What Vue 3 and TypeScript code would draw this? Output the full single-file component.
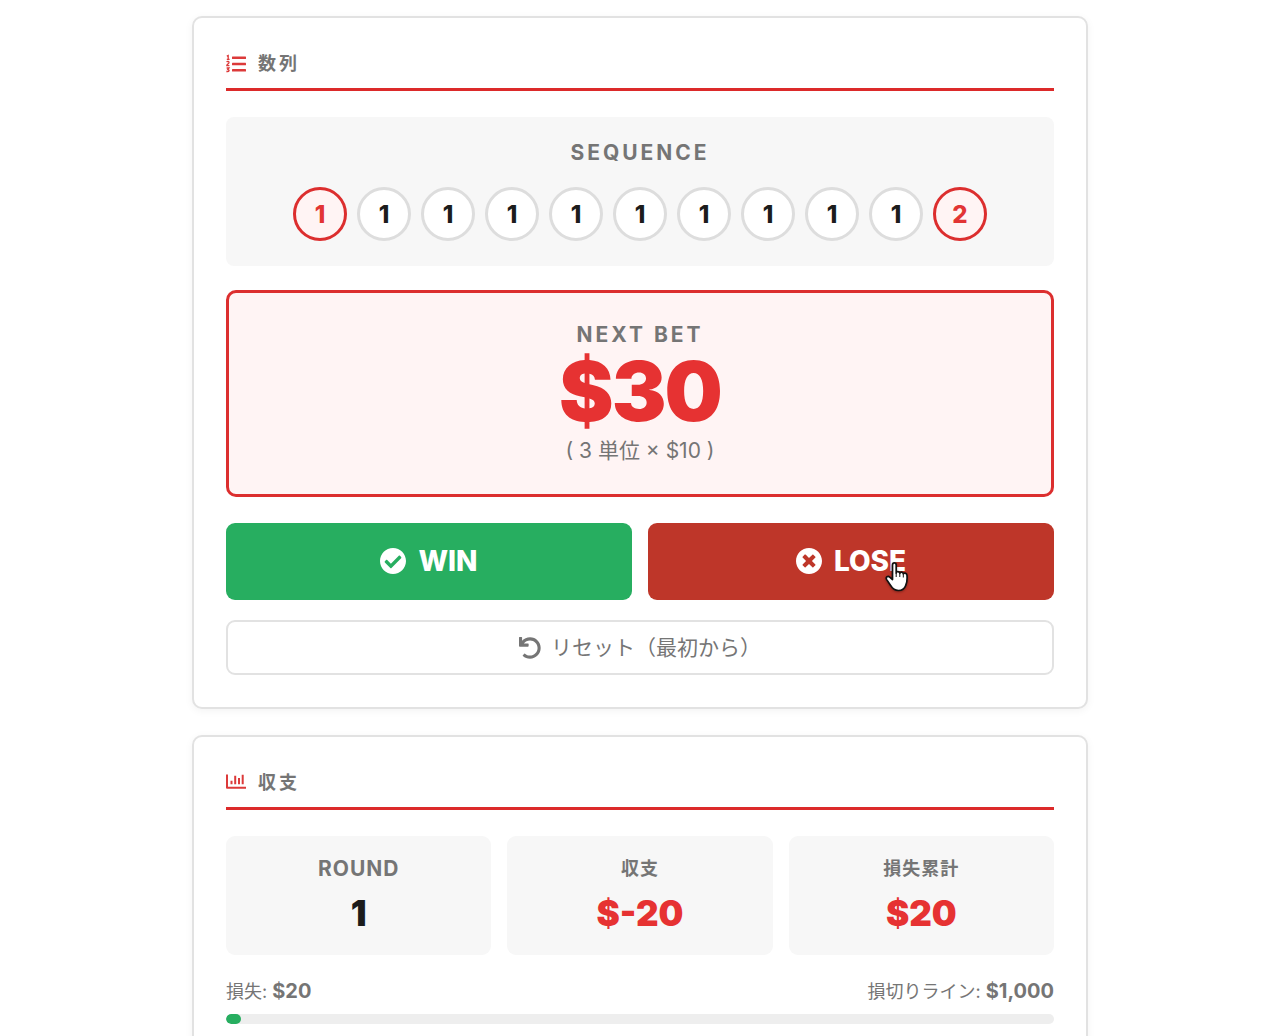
<script setup lang="ts">
interface Stat {
  label: string
  value: string
  latin?: boolean
  loss?: boolean
}

const sequence: number[] = [1, 1, 1, 1, 1, 1, 1, 1, 1, 1, 2]
const isEdge = (index: number): boolean => index === 0 || index === sequence.length - 1

const stats: Stat[] = [
  { label: 'ROUND', value: '1', latin: true },
  { label: '収支', value: '$-20', loss: true },
  { label: '損失累計', value: '$20', loss: true },
]

const lossPercent = 1.8
</script>

<template>
  <main class="page">
    <section class="card">
      <h2 class="card-title">
        <svg class="title-icon" viewBox="0 0 20 20" aria-hidden="true">
          <g fill="currentColor">
            <rect x="6" y="2.600" width="14" height="2.400" rx="0.5" />
            <rect x="6" y="8.800" width="14" height="2.400" rx="0.5" />
            <rect x="6" y="15" width="14" height="2.400" rx="0.5" />
          </g>
          <g fill="none" stroke="currentColor" stroke-width="1.3">
            <path d="M.8 2.200 2.200 1.600V5.400M.8 5.400h2.800" />
            <path d="M.6 8c1-1 2.600-.6 2.400.6C2.900 9.600.8 10.600.8 11.600h2.600" />
            <path d="M.6 14h2.400l-1.200 1.600c2 0 1.800 2.500-1.400 1.900" />
          </g>
        </svg>
        数列
      </h2>

      <div class="sequence">
        <h3 class="eyebrow">SEQUENCE</h3>
        <ol class="chips">
          <li v-for="(n, i) in sequence" :key="i" class="chip" :class="{ edge: isEdge(i) }">{{ n }}</li>
        </ol>
      </div>

      <div class="bet">
        <h3 class="eyebrow">NEXT BET</h3>
        <p class="bet-amount">$30</p>
        <p class="bet-detail">( 3 単位 × $10 )</p>
      </div>

      <div class="actions">
        <button type="button" class="action win">
          <svg class="action-icon" viewBox="8 8 496 496" aria-hidden="true">
            <path fill="currentColor" d="M504 256c0 136.967-111.033 248-248 248S8 392.967 8 256 119.033 8 256 8s248 111.033 248 248zM227.314 387.314l184-184c6.248-6.248 6.248-16.379 0-22.627l-22.627-22.627c-6.248-6.249-16.379-6.249-22.628 0L216 308.118l-70.059-70.059c-6.248-6.248-16.379-6.248-22.628 0l-22.627 22.627c-6.248 6.248-6.248 16.379 0 22.627l104 104c6.249 6.249 16.379 6.249 22.628.001z" />
          </svg>
          WIN
        </button>
        <button type="button" class="action lose">
          <svg class="action-icon" viewBox="8 8 496 496" aria-hidden="true">
            <path fill="currentColor" d="M256 8C119 8 8 119 8 256s111 248 248 248 248-111 248-248S393 8 256 8zm121.600 313.100c4.700 4.700 4.700 12.300 0 17L338 377.600c-4.700 4.700-12.300 4.700-17 0L256 312l-65.100 65.600c-4.700 4.700-12.300 4.700-17 0L134.400 338c-4.700-4.700-4.700-12.300 0-17l65.600-65-65.600-65.100c-4.700-4.700-4.700-12.300 0-17l39.600-39.600c4.700-4.700 12.300-4.700 17 0l65 65.700 65.100-65.600c4.700-4.700 12.300-4.700 17 0l39.600 39.600c4.700 4.700 4.700 12.300 0 17L312 256l65.600 65.100z" />
          </svg>
          LOSE
          <svg class="pointer" viewBox="0 0 24 32" aria-hidden="true">
            <path
              fill="#fff"
              stroke="#111"
              stroke-width="1.700"
              stroke-linejoin="round"
              d="M7.500 18.500V4.200c0-3 3.700-3 3.700 0V12c0-2 3.400-2 3.600.3.300-1.700 3.200-1.600 3.500.7.400-1.500 3.500-1.300 3.700 1.200.3 3.800.2 7.300-1.300 10.300-1.300 3.500-4 5-7.200 5-4 0-6-1.800-7.700-4.800L1.700 18.600c-1.500-2.600 1.300-4.300 3-2.500z"
            />
            <path fill="none" stroke="#111" stroke-width="1" d="M11.200 12v4M14.800 12.500V16M18.300 13.200V16.500" />
          </svg>
        </button>
      </div>

      <button type="button" class="reset">
        <svg class="reset-icon" viewBox="0 0 512 512" aria-hidden="true">
          <path fill="currentColor" d="M212.333 224.333H12c-6.627 0-12-5.373-12-12V12C0 5.373 5.373 0 12 0h48c6.627 0 12 5.373 12 12v78.112C117.773 39.279 184.260 7.470 258.175 8.007c136.906.994 246.448 111.623 246.157 248.532C504.041 393.258 393.120 504 256.333 504c-64.089 0-122.496-24.313-166.510-64.215-5.099-4.622-5.334-12.554-.467-17.420l33.967-33.967c4.474-4.474 11.662-4.717 16.401-.525C170.760 415.336 211.580 432 256.333 432c97.268 0 176-78.716 176-176 0-97.267-78.716-176-176-176-58.496 0-110.280 28.476-142.274 72.333h98.274c6.627 0 12 5.373 12 12v48c0 6.627-5.373 12-12 12z" />
        </svg>
        リセット（最初から）
      </button>
    </section>

    <section class="card">
      <h2 class="card-title">
        <svg class="title-icon" viewBox="0 0 20 20" aria-hidden="true">
          <g fill="none" stroke="currentColor" stroke-width="2">
            <path d="M1 1.500v13.200h19" stroke-linejoin="round" />
            <path d="M5.500 7.700v3.600M9.200 2.700v8.600M13 5v6.300M16.700 1.800v9.500" />
          </g>
        </svg>
        収支
      </h2>

      <dl class="stats">
        <div v-for="stat in stats" :key="stat.label" class="stat">
          <dt class="stat-label" :class="{ latin: stat.latin }">{{ stat.label }}</dt>
          <dd class="stat-value" :class="{ loss: stat.loss }">{{ stat.value }}</dd>
        </div>
      </dl>

      <div class="meter-labels">
        <span>損失: <strong>$20</strong></span>
        <span>損切りライン: <strong>$1,000</strong></span>
      </div>
      <div class="meter" role="progressbar" aria-label="損失" aria-valuemin="0" aria-valuemax="1000" aria-valuenow="20">
        <div class="meter-fill" :style="{ width: lossPercent + '%' }"></div>
      </div>
    </section>
  </main>
</template>

<style>
body {
  margin: 0;
  background: #fff;
}
</style>

<style scoped>
.page {
  box-sizing: border-box;
  max-width: 928px;
  margin: 0 auto;
  padding: 16px;
  display: flex;
  flex-direction: column;
  gap: 26px;
  font-family: Inter, "Noto Sans CJK JP", sans-serif;
  color: #757575;
}
.page * {
  box-sizing: border-box;
}
h2,
h3,
p,
ol,
dl,
dd {
  margin: 0;
  padding: 0;
}
.card {
  padding: 32px;
  border: 2px solid #e2e2e2;
  border-radius: 10px;
  background: #fff;
  box-shadow: 0 2px 8px rgba(0, 0, 0, 0.05);
}
.card-title {
  display: flex;
  align-items: center;
  gap: 12px;
  margin-bottom: 26px;
  padding-bottom: 10px;
  border-bottom: 3px solid #dc2a2a;
  font-size: 18px;
  line-height: 28px;
  font-weight: 700;
  letter-spacing: 3px;
}
.title-icon {
  width: 20px;
  height: 20px;
  color: #dc3a3a;
}
.sequence {
  margin-bottom: 24px;
  padding: 24px 16px 25px;
  border-radius: 8px;
  background: #f7f7f7;
  text-align: center;
}
.eyebrow {
  font-size: 21px;
  line-height: 24px;
  font-weight: 700;
  letter-spacing: 3px;
}
.chips {
  display: flex;
  flex-wrap: wrap;
  justify-content: center;
  gap: 10px;
  margin-top: 22px;
  list-style: none;
}
.chip {
  display: flex;
  align-items: center;
  justify-content: center;
  width: 54px;
  height: 54px;
  border: 3px solid #ddd;
  border-radius: 50%;
  background: #fff;
  color: #1c1c1c;
  font-size: 24px;
  font-weight: 800;
}
.chip.edge {
  border-color: #dc2e2e;
  background: #fff4f4;
  color: #e23434;
}
.bet {
  margin-bottom: 26px;
  padding: 30px 16px 29px;
  border: 3px solid #dc2e2e;
  border-radius: 10px;
  background: #fff4f4;
  text-align: center;
}
.bet-amount {
  color: #e63232;
  font-size: 82px;
  line-height: 90px;
  font-weight: 900;
  letter-spacing: -2px;
}
.bet-detail {
  font-size: 21px;
  line-height: 28px;
}
.actions {
  display: grid;
  grid-template-columns: 1fr 1fr;
  gap: 16px;
  margin-bottom: 20px;
}
.action {
  position: relative;
  display: flex;
  align-items: center;
  justify-content: center;
  gap: 12px;
  padding: 18px 18px 19px;
  border: 0;
  border-radius: 9px;
  color: #fff;
  font-family: inherit;
  font-size: 28px;
  line-height: 40px;
  font-weight: 800;
}
.win {
  background: #27ae60;
}
.lose {
  background: #be3629;
}
.action-icon {
  width: 26px;
  height: 26px;
}
.pointer {
  position: absolute;
  top: 38px;
  left: calc(50% + 34px);
  width: 24px;
  height: 32px;
  filter: drop-shadow(0 1px 1px rgba(0, 0, 0, 0.3));
}
.reset {
  display: flex;
  align-items: center;
  justify-content: center;
  gap: 10px;
  width: 100%;
  padding: 11px 11px 10px;
  border: 2px solid #e2e2e2;
  border-radius: 9px;
  background: #fff;
  color: #757575;
  font-family: inherit;
  font-size: 21px;
  line-height: 30px;
}
.reset-icon {
  width: 22px;
  height: 22px;
}
.stats {
  display: grid;
  grid-template-columns: repeat(3, 1fr);
  gap: 16px;
}
.stat {
  padding: 20px 16px;
  border-radius: 9px;
  background: #f7f7f7;
  text-align: center;
}
.stat-label {
  font-size: 18px;
  line-height: 26px;
  font-weight: 700;
  letter-spacing: 1px;
}
.stat-label.latin {
  font-size: 21px;
}
.stat-value {
  margin-top: 9px;
  color: #1c1c1c;
  font-size: 35px;
  line-height: 44px;
  font-weight: 900;
}
.stat-value.loss {
  color: #e63232;
}
.meter-labels {
  display: flex;
  justify-content: space-between;
  margin: 22px 0 8px;
  font-size: 18px;
  line-height: 28px;
}
.meter-labels strong {
  font-size: 20px;
  font-weight: 700;
}
.meter {
  height: 10px;
  border-radius: 5px;
  background: #eee;
  overflow: hidden;
}
.meter-fill {
  height: 100%;
  border-radius: 5px;
  background: #27ae60;
}
</style>
